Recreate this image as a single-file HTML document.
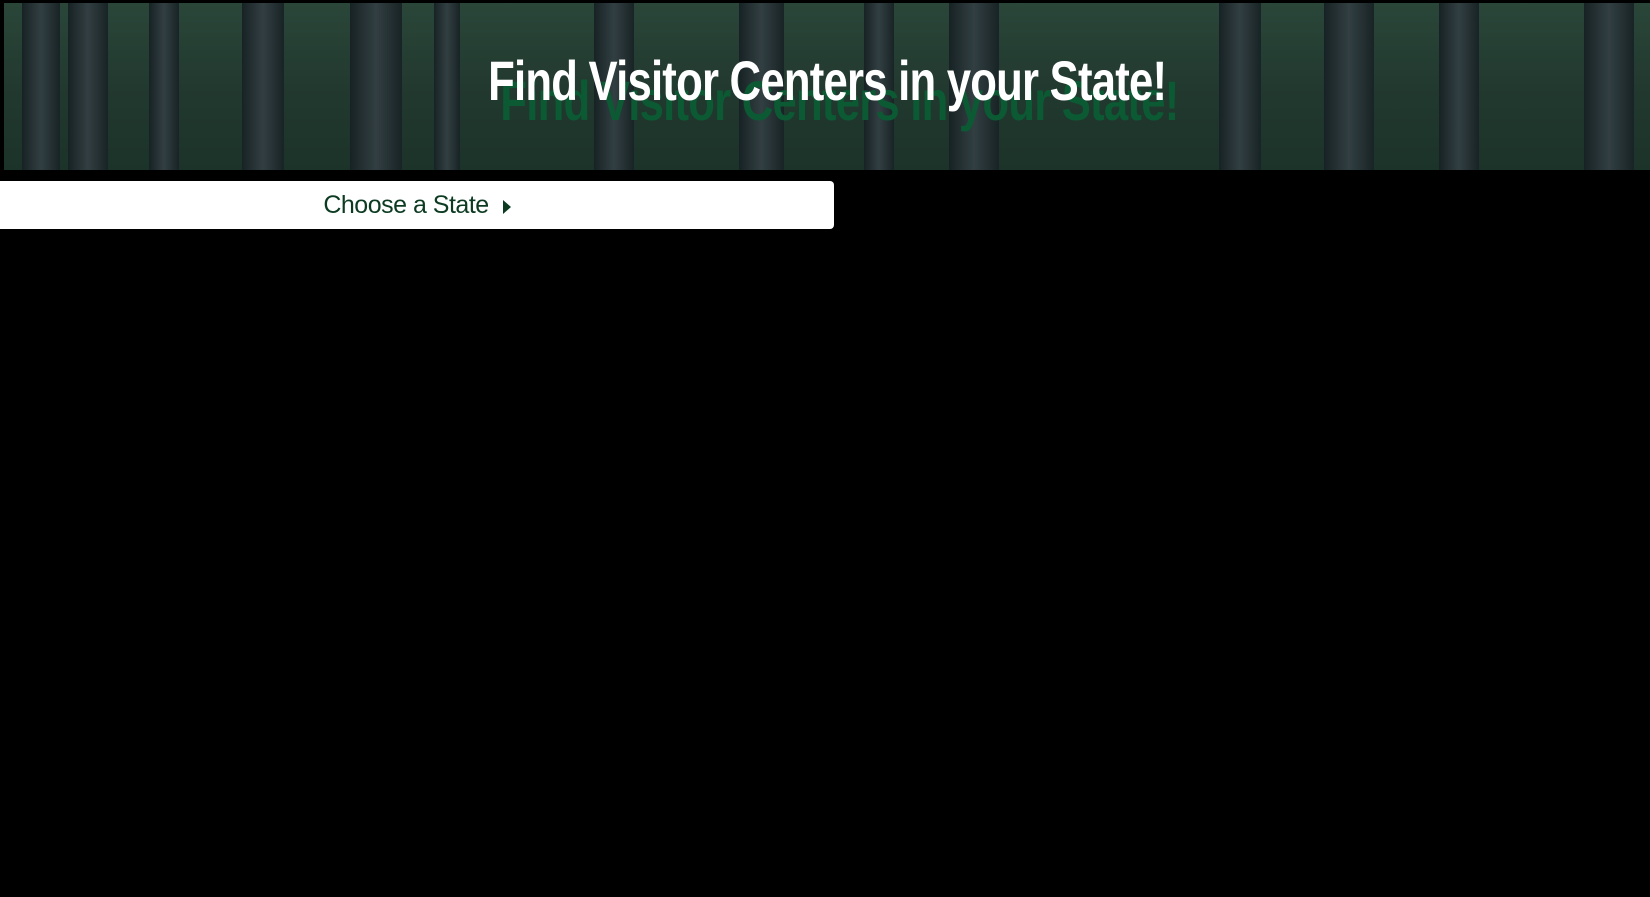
<!DOCTYPE html>
<html><head><style>
html,body{margin:0;padding:0;background:#000;width:1650px;height:897px;overflow:hidden}
.banner{position:absolute;left:4px;top:3px;width:1646px;height:167px;overflow:hidden;
background:linear-gradient(180deg,#2a4639 0%,#22392f 50%,#1c3329 100%)}
.tr{position:absolute;top:0;height:100%;background:linear-gradient(90deg,#172224,#323f42 50%,#182325)}
.title{position:absolute;left:0;right:0;top:48px;text-align:center;font-family:"Liberation Sans Narrow","Liberation Sans",sans-serif;font-weight:bold;font-size:56px;letter-spacing:-1px;transform:scaleX(0.78);transform-origin:835px 0}
.sh{color:#0b5a33;top:68px;left:20px}
.fg{color:#fff}
.btn{position:absolute;left:0;top:181px;width:834px;height:48px;background:#fff;border-radius:0 4px 4px 0;text-align:center;font-family:"Liberation Sans",sans-serif;font-size:25px;line-height:48px;color:#0c3b22;letter-spacing:-0.5px}
.tri{display:inline-block;width:0;height:0;border-top:7px solid transparent;border-bottom:7px solid transparent;border-left:8px solid #0c3b22;margin-left:14px;vertical-align:-1px}
</style></head><body>
<div class="banner">
<div class="tr" style="left:18px;width:38px"></div>
<div class="tr" style="left:64px;width:40px"></div>
<div class="tr" style="left:145px;width:30px"></div>
<div class="tr" style="left:238px;width:42px"></div>
<div class="tr" style="left:346px;width:52px"></div>
<div class="tr" style="left:430px;width:26px"></div>
<div class="tr" style="left:590px;width:40px"></div>
<div class="tr" style="left:735px;width:45px"></div>
<div class="tr" style="left:860px;width:30px"></div>
<div class="tr" style="left:945px;width:50px"></div>
<div class="tr" style="left:1215px;width:42px"></div>
<div class="tr" style="left:1320px;width:50px"></div>
<div class="tr" style="left:1435px;width:40px"></div>
<div class="tr" style="left:1580px;width:50px"></div>
</div>
<div class="title sh">Find Visitor Centers in your State!</div>
<div class="title fg">Find Visitor Centers in your State!</div>
<div class="btn">Choose a State<span class="tri"></span></div>
</body></html>
